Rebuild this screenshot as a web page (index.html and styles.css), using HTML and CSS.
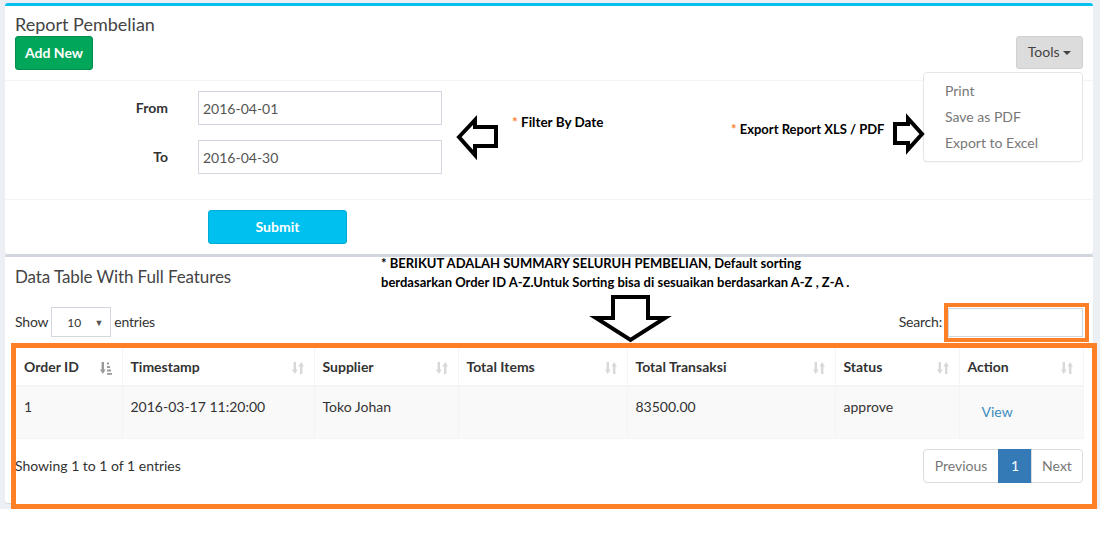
FILE: index.html
```html
<!DOCTYPE html>
<html lang="id">
<head>
<meta charset="utf-8">
<title>Report Pembelian</title>
<link rel="stylesheet" href="styles.css">
</head>
<body>
<div class="wrapper">
  <section class="box box-info">
    <div class="box-header with-border">
      <h3 class="box-title">Report Pembelian</h3>
      <div class="header-actions">
        <button class="btn btn-success">Add New</button>
        <div class="tools">
          <button class="btn btn-tools">Tools <span class="caret"></span></button>
          <ul class="dropdown-menu">
            <li>Print</li>
            <li>Save as PDF</li>
            <li>Export to Excel</li>
          </ul>
        </div>
      </div>
    </div>
    <div class="box-body">
      <div class="form-group">
        <label class="form-label">From</label>
        <input class="form-control" type="text" value="2016-04-01">
      </div>
      <div class="form-group">
        <label class="form-label">To</label>
        <input class="form-control" type="text" value="2016-04-30">
      </div>
    </div>
    <div class="box-footer">
      <button class="btn btn-info">Submit</button>
    </div>
  </section>

  <section class="box box-default">
    <div class="box-header">
      <h3 class="box-title dt-title">Data Table With Full Features</h3>
    </div>
    <div class="box-body">
      <div class="dt-top">
        <div class="dt-length">Show <span class="fake-select"><span class="sel-val">10</span><span class="sel-arrow">▼</span></span> entries</div>
        <div class="dt-search">Search:<span class="search-hl"><input class="search-input" type="text"></span></div>
      </div>
      <div class="highlight-frame">
        <table class="data-table">
          <colgroup>
            <col style="width:106px"><col style="width:192px"><col style="width:144px"><col style="width:169px"><col style="width:208px"><col style="width:124px"><col style="width:124px">
          </colgroup>
          <thead>
            <tr>
              <th>Order ID <svg class="sort-icon active" viewBox="0 0 12 14"><rect x="1.6" y="1" width="2.4" height="8"/><polygon points="0,8.5 5.6,8.5 2.8,13"/><rect x="7" y="1.5" width="2" height="2"/><rect x="7" y="5" width="3" height="2"/><rect x="7" y="8.5" width="4" height="2"/><rect x="7" y="12" width="5" height="1.8"/></svg></th>
              <th>Timestamp <svg class="sort-icon" viewBox="0 0 12 14"><rect x="1.6" y="1" width="2.4" height="8"/><polygon points="0,8.5 5.6,8.5 2.8,13"/><polygon points="6.4,5.5 12,5.5 9.2,1"/><rect x="8" y="5" width="2.4" height="8"/></svg></th>
              <th>Supplier <svg class="sort-icon" viewBox="0 0 12 14"><rect x="1.6" y="1" width="2.4" height="8"/><polygon points="0,8.5 5.6,8.5 2.8,13"/><polygon points="6.4,5.5 12,5.5 9.2,1"/><rect x="8" y="5" width="2.4" height="8"/></svg></th>
              <th>Total Items <svg class="sort-icon" viewBox="0 0 12 14"><rect x="1.6" y="1" width="2.4" height="8"/><polygon points="0,8.5 5.6,8.5 2.8,13"/><polygon points="6.4,5.5 12,5.5 9.2,1"/><rect x="8" y="5" width="2.4" height="8"/></svg></th>
              <th>Total Transaksi <svg class="sort-icon" viewBox="0 0 12 14"><rect x="1.6" y="1" width="2.4" height="8"/><polygon points="0,8.5 5.6,8.5 2.8,13"/><polygon points="6.4,5.5 12,5.5 9.2,1"/><rect x="8" y="5" width="2.4" height="8"/></svg></th>
              <th>Status <svg class="sort-icon" viewBox="0 0 12 14"><rect x="1.6" y="1" width="2.4" height="8"/><polygon points="0,8.5 5.6,8.5 2.8,13"/><polygon points="6.4,5.5 12,5.5 9.2,1"/><rect x="8" y="5" width="2.4" height="8"/></svg></th>
              <th>Action <svg class="sort-icon" viewBox="0 0 12 14"><rect x="1.6" y="1" width="2.4" height="8"/><polygon points="0,8.5 5.6,8.5 2.8,13"/><polygon points="6.4,5.5 12,5.5 9.2,1"/><rect x="8" y="5" width="2.4" height="8"/></svg></th>
            </tr>
          </thead>
          <tbody>
            <tr>
              <td>1</td>
              <td>2016-03-17 11:20:00</td>
              <td>Toko Johan</td>
              <td></td>
              <td>83500.00</td>
              <td>approve</td>
              <td><a class="btn-link" href="#">View</a></td>
            </tr>
          </tbody>
        </table>
        <div class="dt-bottom">
          <div class="dt-info">Showing 1 to 1 of 1 entries</div>
          <ul class="pagination">
            <li class="page disabled">Previous</li>
            <li class="page current">1</li>
            <li class="page disabled">Next</li>
          </ul>
        </div>
      </div>
    </div>
  </section>

  <div class="note note-filter"><span class="star">*</span> Filter By Date</div>
  <div class="note note-export"><span class="star">*</span> Export Report XLS / PDF</div>
  <div class="note note-summary">* BERIKUT ADALAH SUMMARY SELURUH PEMBELIAN, Default sorting<br>berdasarkan Order ID A-Z.Untuk Sorting bisa di sesuaikan berdasarkan A-Z , Z-A .</div>

  <svg class="arrows" width="1100" height="551" viewBox="0 0 1100 551">
    <polygon points="459,137 475,120 475,127 496,127 496,146 475,146 475,155"/>
    <polygon points="613,297 648,297 648,318 665,318 630.5,340 596,318 613,318"/>
    <polygon points="895,124 908,124 908,118.5 922,134 908,149.5 908,143 895,143"/>
  </svg>
</div>
</body>
</html>
```

FILE: styles.css
```css
* { box-sizing: border-box; }

html, body {
  margin: 0;
  padding: 0;
  background: #ffffff;
}

body {
  font-family: Lato, "Liberation Sans", sans-serif;
  font-size: 14px;
  line-height: 20px;
  color: #333;
}

.wrapper {
  position: relative;
  background: #ecf0f5;
  padding: 3px 7px 6px 5px;
  width: 1100px;
}

.box {
  position: relative;
  background: #fff;
  border-top: 3px solid #d2d6de;
  border-radius: 3px;
  box-shadow: 0 1px 1px rgba(0,0,0,0.1);
}

.box-info { border-top-color: #00c0ef; }
.box-default { border-top-color: #d2d6de; }

.box-header {
  padding: 8px 10px 10px 10px;
}

.box-default .box-header {
  padding: 10px;
}

.with-border { border-bottom: 1px solid #f4f4f4; }

.box-title {
  margin: 0;
  font-size: 18px;
  line-height: 20px;
  font-weight: 400;
  color: #444;
}

.dt-title {
  font-size: 17px;
  letter-spacing: -0.1px;
}

.header-actions {
  margin-top: 2px;
  display: flex;
  justify-content: space-between;
  align-items: flex-start;
}

.btn {
  font-family: inherit;
  font-size: 14px;
  line-height: 20px;
  height: 34px;
  padding: 6px 12px;
  border-radius: 3px;
  border: 1px solid transparent;
  cursor: pointer;
}

.btn-success {
  background: #00a65a;
  border-color: #008d4c;
  color: #fff;
  font-weight: 700;
  width: 78px;
  padding: 6px 0;
}

.tools { position: relative; }

.btn-tools {
  background: #dcdcdc;
  border-color: #d0d0d0;
  color: #444;
  width: 67px;
  height: 33px;
  padding: 5px 0 6px;
}

.caret {
  display: inline-block;
  width: 0;
  height: 0;
  vertical-align: middle;
  border-top: 4px solid #444;
  border-left: 4px solid transparent;
  border-right: 4px solid transparent;
}

.dropdown-menu {
  position: absolute;
  top: 36px;
  right: 0;
  width: 160px;
  margin: 0;
  padding: 5px 0;
  list-style: none;
  background: #fff;
  border: 1px solid #e6e6e6;
  border-radius: 4px;
  box-shadow: 0 1px 2px rgba(0,0,0,0.04);
  z-index: 5;
}

.dropdown-menu li {
  padding: 3px 20px 3px 21px;
  line-height: 20px;
  color: #777;
}

.box-body { padding: 10px; }

.form-group {
  display: flex;
  align-items: center;
  margin-bottom: 15px;
}

.form-label {
  width: 153px;
  text-align: right;
  font-weight: 700;
  color: #333;
}

.form-control {
  margin-left: 30px;
  width: 244px;
  height: 34px;
  padding: 6px 4px;
  border: 1px solid #d2d6de;
  font-family: inherit;
  font-size: 14px;
  color: #555;
  border-radius: 0;
}

.box-footer {
  border-top: 1px solid #f4f4f4;
  padding: 10px;
}

.btn-info {
  margin-left: 193px;
  width: 139px;
  background: #00c0ef;
  border-color: #00acd6;
  color: #fff;
  font-weight: 700;
}

.dt-top {
  display: flex;
  justify-content: space-between;
  align-items: center;
  height: 30px;
}

.dt-length {
  display: flex;
  align-items: center;
  gap: 3px;
  letter-spacing: -0.2px;
}

.fake-select {
  display: inline-flex;
  align-items: center;
  justify-content: space-between;
  width: 60px;
  height: 30px;
  border: 1px solid #d2d6de;
  padding: 2px 7px 0 15px;
  font-size: 12px;
  letter-spacing: 0;
}

.sel-arrow {
  font-size: 9px;
  color: #555;
}

.dt-search {
  display: flex;
  align-items: center;
  margin-right: -6px;
  letter-spacing: -0.2px;
}

.search-hl {
  display: flex;
  margin-left: 2px;
  border: 4px solid #ff7f27;
  padding: 1px 2px 1px 0;
  background: #fff;
}

.search-input {
  width: 135px;
  height: 29px;
  border: 1px solid #d2d6de;
  margin: 0;
  font-family: inherit;
}

.highlight-frame {
  margin: 6px -14px -16px -4px;
  border: 5px solid #ff7f27;
  padding: 0 9px 21px 0;
  background: #fff;
  position: relative;
}

.data-table {
  width: 1067px;
  border-collapse: collapse;
  table-layout: fixed;
}

.data-table th,
.data-table td {
  border: 1px solid #f4f4f4;
  padding: 8px;
  text-align: left;
  vertical-align: top;
  line-height: 20px;
}

.data-table th {
  position: relative;
  padding: 9px 8px 8px;
  border-bottom-width: 2px;
  font-weight: 700;
  color: #333;
  border-top: 0;
}

.data-table td {
  padding: 10px 8px 8px;
  height: 52px;
}

.data-table tbody tr { background: #f9f9f9; }

.data-table th:first-child,
.data-table td:first-child { border-left: 0; }

.sort-icon {
  position: absolute;
  right: 10px;
  top: 13px;
  width: 12px;
  height: 14px;
  fill: #d8d8d8;
}

.sort-icon.active { fill: #9a9a9a; }

.btn-link {
  display: block;
  padding: 6px 12px 6px 14px;
  margin-top: -1px;
  color: #3c8dbc;
  text-decoration: none;
  line-height: 20px;
}

.dt-bottom {
  display: flex;
  justify-content: space-between;
  align-items: center;
  margin-top: 10px;
}

.dt-info { margin-left: -1px; }

.pagination {
  display: flex;
  list-style: none;
  margin: 0;
  padding: 0;
}

.page {
  height: 34px;
  padding: 6px 11px;
  border: 1px solid #ddd;
  margin-left: -1px;
  background: #fff;
  color: #777;
}

.page:first-child { border-radius: 4px 0 0 4px; width: 76px; text-align: center; padding: 6px 0; }
.page:last-child { border-radius: 0 4px 4px 0; width: 52px; text-align: center; padding: 6px 0; }

.page.current {
  background: #337ab7;
  border-color: #337ab7;
  color: #fff;
  width: 34px;
  text-align: center;
  padding: 6px 0;
}

.note {
  position: absolute;
  font-family: Lato, "Liberation Sans", sans-serif;
  font-weight: 700;
  font-size: 13px;
  line-height: 19px;
  color: #000;
  white-space: nowrap;
  z-index: 6;
}

.star { color: #ff7f27; }

.note-filter { left: 512px; top: 113px; font-size: 13.5px; }
.note-export { left: 731px; top: 120px; }
.note-summary { left: 381px; top: 254px; }

.arrows {
  position: absolute;
  left: 0;
  top: 0;
  pointer-events: none;
  z-index: 7;
}

.arrows polygon {
  fill: #fff;
  stroke: #000;
  stroke-width: 4;
  stroke-linejoin: miter;
}
```
